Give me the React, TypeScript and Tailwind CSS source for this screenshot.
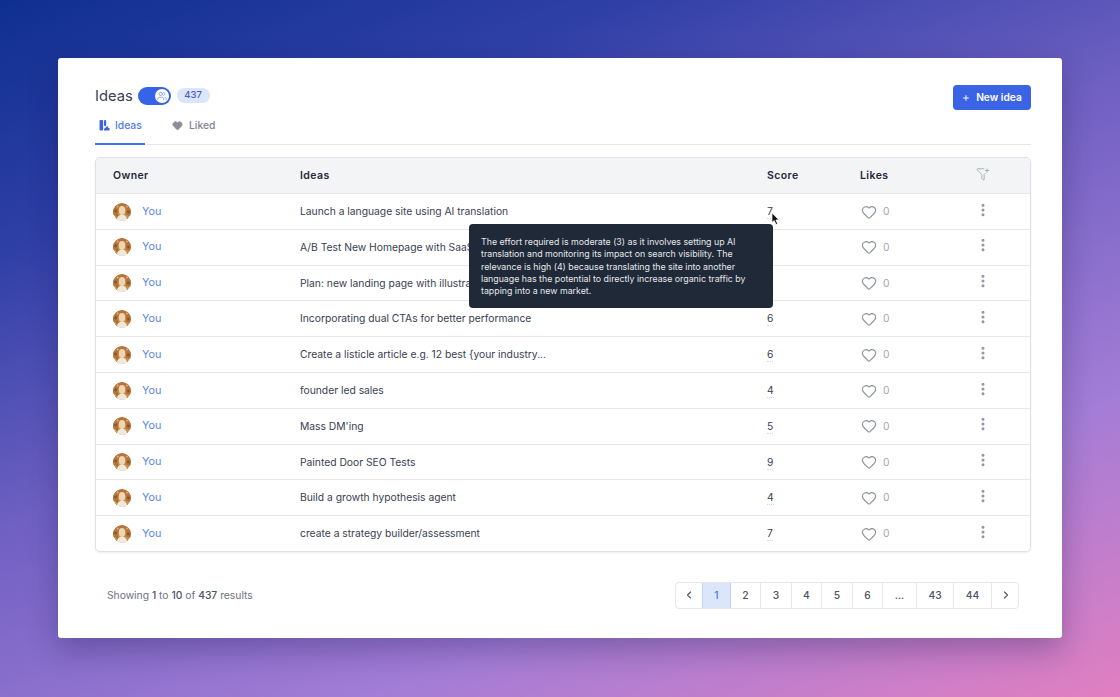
import { ChevronLeft, ChevronRight, EllipsisVertical, FunnelPlus, Heart, Plus, Users } from "lucide-react";

const ROWS = [
  { title: "Launch a language site using AI translation", score: 7 },
  { title: "A/B Test New Homepage with SaaS", score: 8 },
  { title: "Plan: new landing page with illustrations", score: 6 },
  { title: "Incorporating dual CTAs for better performance", score: 6 },
  { title: "Create a listicle article e.g. 12 best {your industry...", score: 6 },
  { title: "founder led sales", score: 4 },
  { title: "Mass DM'ing", score: 5 },
  { title: "Painted Door SEO Tests", score: 9 },
  { title: "Build a growth hypothesis agent", score: 4 },
  { title: "create a strategy builder/assessment", score: 7 },
];

const PAGES = [
  { label: "1", width: "w-[29px]", active: true },
  { label: "2", width: "w-[30px]" },
  { label: "3", width: "w-[31px]" },
  { label: "4", width: "w-[30px]" },
  { label: "5", width: "w-[31px]" },
  { label: "6", width: "w-[30px]" },
  { label: "...", width: "w-[34px]" },
  { label: "43", width: "w-[37px]" },
  { label: "44", width: "w-[38px]" },
];

function Avatar() {
  return (
    <svg width="18" height="18" viewBox="0 0 18 18" className="shrink-0 rounded-full">
      <circle cx="9" cy="9" r="9" fill="#c9924f" />
      <path d="M0 5 Q4 0 9 0 Q14 0 18 5 L18 13 L13 12 L12.5 4.5 L6 4.5 L5 12 L0 12 Z" fill="#b5743a" />
      <ellipse cx="9" cy="7.5" rx="3.2" ry="4.4" fill="#efd5b4" />
      <path d="M3.5 18 Q4.5 11.5 9 11.5 Q13.5 11.5 14.5 18 Z" fill="#eee9dd" />
      <circle cx="2.6" cy="8" r="1.4" fill="#8a5526" />
      <circle cx="15.4" cy="9" r="1.4" fill="#8a5526" />
      <circle cx="4.2" cy="12.6" r="1.1" fill="#9b6230" />
      <circle cx="14" cy="3.4" r="1" fill="#e0b078" />
      <circle cx="4.6" cy="3.6" r="1" fill="#e0b078" />
    </svg>
  );
}

function IdeasTabIcon() {
  return (
    <svg width="11" height="11" viewBox="0 0 11 11" fill="#3b63e6">
      <rect x="0.5" y="0" width="3.6" height="10.5" rx="1" />
      <rect x="5" y="0" width="2.2" height="6" rx="1" />
      <path d="M5 10.5 L10.5 10.5 L10.5 8 Q8.6 8.4 8.4 5.8 L5 9 Z" />
    </svg>
  );
}

function Cursor() {
  return (
    <svg width="9" height="14" viewBox="0 0 9 14" className="absolute left-[771px] top-[212px]">
      <path d="M1 1 L1 10.5 L3.2 8.6 L5 12.6 L6.6 11.8 L4.9 8 L7.8 7.8 Z" fill="#111" stroke="#fff" strokeWidth="0.7" />
    </svg>
  );
}

export default function App() {
  return (
    <div className="relative h-[697px] w-[1120px] overflow-hidden bg-[linear-gradient(158deg,#0f2f90_0%,#2f3fa6_22%,#6f60c2_46%,#a37dd6_74%,#e17fc0_100%)] p-[58px] font-['Inter',sans-serif]">
      <div className="h-[580px] w-[1004px] rounded-[3px] bg-white pl-[37px] pr-[31px] pt-[27px] shadow-[0_12px_30px_rgba(20,20,70,0.3)]">
        {/* Title row */}
        <div className="flex h-[25px] items-start justify-between">
          <div className="flex h-[21px] items-center">
            <h1 className="text-[14.7px] leading-5 text-[#374151]">Ideas</h1>
            <div className="ml-[5px] flex h-[18px] w-[33px] items-center justify-end rounded-full bg-[#3563e9] pr-[2px]">
              <span className="grid h-[14px] w-[14px] place-items-center rounded-full bg-white">
                <Users size={10} strokeWidth={1.5} className="text-[#5b84e8]" />
              </span>
            </div>
            <span className="ml-[6px] grid h-[15px] w-[33px] place-items-center rounded-full bg-[#dbe6fb] text-[9.5px] font-medium text-[#4a62c4]">
              437
            </span>
          </div>
          <button className="flex h-[25px] w-[78px] items-center justify-center gap-[6px] rounded-[4px] bg-[#3b63e6] text-[10.2px] font-semibold text-white">
            <Plus size={8} strokeWidth={3} />
            New idea
          </button>
        </div>

        {/* Tabs */}
        <div className="mt-[8px] flex h-[27px] border-b border-[#e5e7eb] text-[10.3px] font-medium">
          <div className="flex h-[27px] w-[50px] items-start gap-[5px] border-b-2 border-[#3b74ea] pl-[4px] pt-[2px] text-[#4f7be8]">
            <IdeasTabIcon />
            <span className="leading-[11px]">Ideas</span>
          </div>
          <div className="ml-[27px] flex items-start gap-[6px] pt-[2px] text-[#7d8493]">
            <Heart size={11} fill="#8b8f9b" stroke="#8b8f9b" />
            <span className="leading-[11px]">Liked</span>
          </div>
        </div>

        {/* Table */}
        <div className="mt-[12px] w-[936px] overflow-hidden rounded-[5px] border border-[#dfe1e6] shadow-[0_1px_2px_rgba(0,0,0,0.08)]">
          <div className="grid h-[35px] grid-cols-[187px_467px_93px_93px_1fr] items-center bg-[#f3f4f6] pl-[17px] text-[10.5px] font-semibold tracking-[0.4px] text-[#1f2937]">
            <span>Owner</span>
            <span>Ideas</span>
            <span>Score</span>
            <span>Likes</span>
            <span className="pl-[23px]">
              <FunnelPlus size={14} strokeWidth={1.4} className="-translate-y-[2px] text-[#9ca3af]" />
            </span>
          </div>
          {ROWS.map((row, i) => (
            <div
              key={i}
              className="grid h-[35.8px] grid-cols-[187px_467px_93px_93px_1fr] items-center border-t border-[#e5e7eb] pl-[17px] pt-[0.5px] text-[10.3px] text-[#374151]"
            >
              <div className="flex items-center gap-[11px]">
                <Avatar />
                <span className="text-[10.8px] text-[#5b84e8]">You</span>
              </div>
              <span>{row.title}</span>
              <span>
                <span className="border-b border-dotted border-[#d5d8dd] pb-[1px]">{row.score}</span>
              </span>
              <div className="flex items-center gap-[6px] text-[#a2a7b1]">
                <Heart size={16} strokeWidth={1.7} className="ml-[1px] text-[#8d929e]" />
                <span>0</span>
              </div>
              <span className="-translate-y-[2px] pl-[22px]">
                <EllipsisVertical size={16} strokeWidth={2.5} className="text-[#8f95a3]" />
              </span>
            </div>
          ))}
        </div>

        {/* Footer */}
        <div className="mt-[30px] flex h-[27px] items-center justify-between pl-[12px] pr-[12px]">
          <p className="text-[10.3px] text-[#6b7280]">
            Showing <span className="font-medium text-[#4b5563]">1</span> to{" "}
            <span className="font-medium text-[#4b5563]">10</span> of{" "}
            <span className="font-medium text-[#4b5563]">437</span> results
          </p>
          <div className="flex h-[27px] overflow-hidden rounded-[4px] border border-[#e5e7eb] text-[10.3px] font-medium text-[#4b5563]">
            <span className="grid w-[26px] place-items-center">
              <ChevronLeft size={12} strokeWidth={2.2} />
            </span>
            {PAGES.map((p) => (
              <span
                key={p.label}
                className={
                  p.active
                    ? `grid place-items-center border-x border-[#bcd3fa] bg-[#dbe6fb] text-[#4f7be8] ${p.width}`
                    : `grid place-items-center border-r border-[#e5e7eb] ${p.width}`
                }
              >
                {p.label}
              </span>
            ))}
            <span className="grid w-[26px] place-items-center pl-[2px]">
              <ChevronRight size={12} strokeWidth={2.2} />
            </span>
          </div>
        </div>
      </div>

      {/* Tooltip */}
      <div className="absolute left-[469px] top-[224px] h-[84px] w-[304px] rounded-[4px] bg-[#1f2937] px-[12px] pt-[12px] text-[8.8px] leading-[12.3px] text-[#e5e7eb]">
        The effort required is moderate (3) as it involves setting up AI translation and monitoring its impact on search
        visibility. The relevance is high (4) because translating the site into another language has the potential to
        directly increase organic traffic by tapping into a new market.
      </div>
      <Cursor />
    </div>
  );
}
